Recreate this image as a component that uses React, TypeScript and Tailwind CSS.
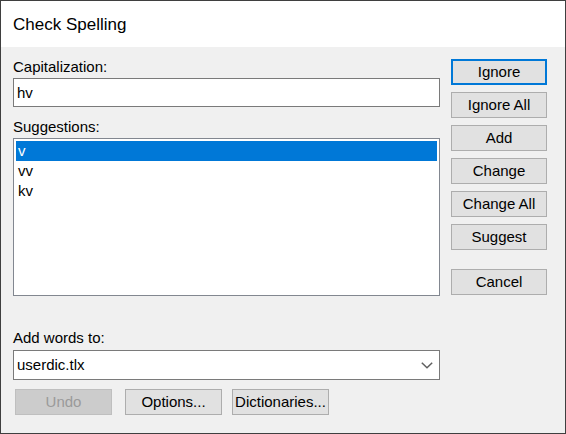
import React from "react";

const suggestions = ["v", "vv", "kv"];

function Button({
  label,
  primary,
  disabled,
  className = "",
}: {
  label: string;
  primary?: boolean;
  disabled?: boolean;
  className?: string;
}) {
  let look = "border border-[#adadad] bg-[#e1e1e1] text-black";
  if (primary) look = "border-2 border-[#0078d7] bg-[#e1e1e1] text-black";
  if (disabled) look = "border border-[#bfbfbf] bg-[#cccccc] text-[#9a9a9a]";
  return (
    <button
      type="button"
      disabled={disabled}
      className={`h-[26px] flex items-center justify-center leading-[24px] text-[15px] ${look} ${className}`}
    >
      {label}
    </button>
  );
}

export default function App() {
  return (
    <div className="w-[566px] h-[434px] border border-[#3f3f3f] bg-[#f0f0f0] flex flex-col text-[15px] text-black font-['Liberation_Sans',Arial,sans-serif]">
      {/* title bar */}
      <div className="h-[46px] shrink-0 bg-white flex items-center pl-[12px] pt-[1px] text-[17px] leading-[20px]">
        Check Spelling
      </div>

      <div className="flex flex-row pl-[12px]">
        {/* left side */}
        <div className="w-[427px] flex flex-col">
          <div className="mt-[11px] leading-[18px]">Capitalization:</div>
          <div className="mt-[2px] h-[29px] border border-[#7a7a7a] bg-white pl-[3px] leading-[27px]">
            hv
          </div>

          <div className="mt-[11px] leading-[18px]">Suggestions:</div>
          <div className="mt-[2px] h-[158px] border border-[#828790] bg-white p-[2px]">
            {suggestions.map((s, i) => (
              <div
                key={s}
                className={`h-[20px] leading-[20px] pl-[2px] ${
                  i === 0 ? "bg-[#0078d7] text-white" : ""
                }`}
              >
                {s}
              </div>
            ))}
          </div>

          <div className="mt-[33px] leading-[18px]">Add words to:</div>
          <div className="mt-[3px] h-[30px] border border-[#7a7a7a] bg-white flex items-center justify-between pl-[3px] pr-[6px]">
            <span className="leading-[28px]">userdic.tlx</span>
            <svg width="12" height="7" viewBox="0 0 12 7" fill="none">
              <polyline points="0.8,0.8 6,5.8 11.2,0.8" stroke="#606060" strokeWidth="1.5" />
            </svg>
          </div>

          <div className="mt-[9px] flex flex-row">
            <Button label="Undo" disabled className="w-[97px] ml-[2px]" />
            <Button label="Options..." className="w-[97px] ml-[13px]" />
            <Button label="Dictionaries..." className="w-[97px] ml-[10px]" />
          </div>
        </div>

        {/* right side buttons */}
        <div className="ml-[11px] mt-[12px] w-[96px] flex flex-col gap-[7px]">
          <Button label="Ignore" primary />
          <Button label="Ignore All" />
          <Button label="Add" />
          <Button label="Change" />
          <Button label="Change All" />
          <Button label="Suggest" />
          <Button label="Cancel" className="mt-[12px]" />
        </div>
      </div>
    </div>
  );
}
